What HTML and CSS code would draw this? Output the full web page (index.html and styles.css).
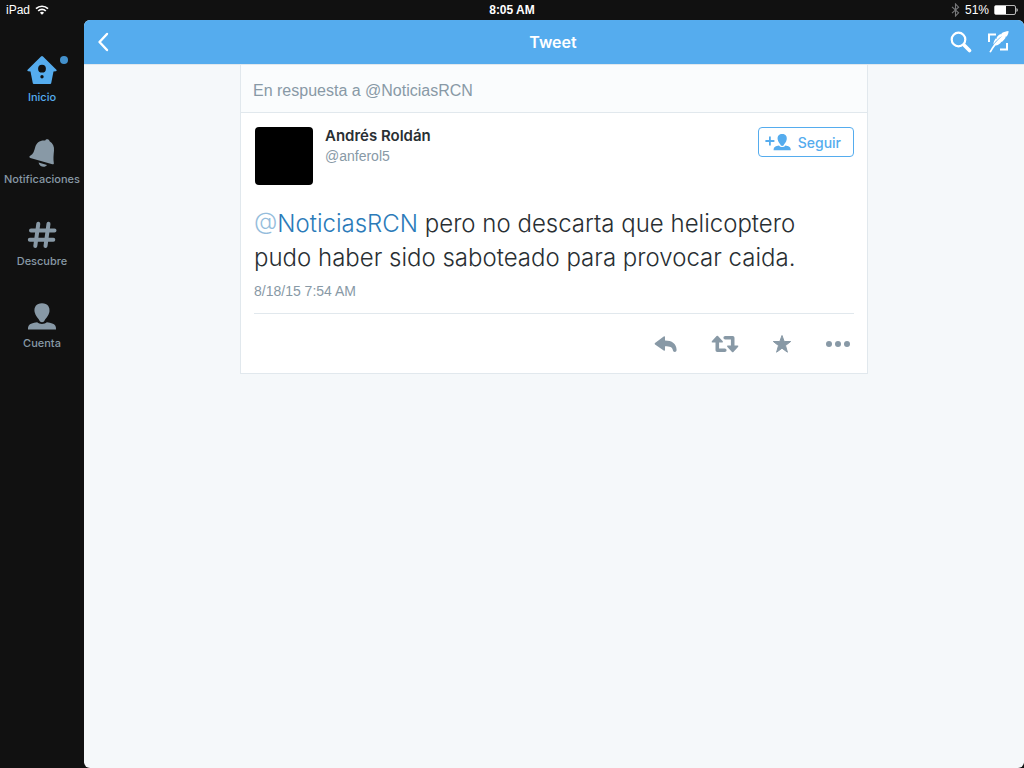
FILE: index.html
```html
<!DOCTYPE html>
<html lang="es">
<head>
  <meta charset="utf-8">
  <meta name="viewport" content="width=device-width, initial-scale=1">
  <title>Tweet</title>
  <link rel="stylesheet" href="styles.css">
</head>
<body>
  <div class="status-bar">
    <div class="status-left">
      <span>iPad</span>
      <svg class="wifi" width="14" height="10" viewBox="0 0 14 10" fill="none" stroke="#fff" stroke-width="1.7">
        <path d="M1 3.7a8.6 8.6 0 0 1 12 0M3.2 6a5.4 5.4 0 0 1 7.6 0"/>
        <path d="M7 9.8L4.9 7.7a3 3 0 0 1 4.2 0z" fill="#fff" stroke="none"/>
      </svg>
    </div>
    <span class="clock">8:05 AM</span>
    <div class="status-right">
      <svg width="9" height="14" viewBox="0 0 9 14" fill="none" stroke="#77787a" stroke-width="1.1">
        <path d="M1 3.8l6.6 6L4.5 13V1l3.1 3.2L1 10.2"/>
      </svg>
      <span>51%</span>
      <svg width="24" height="10" viewBox="0 0 24 10">
        <rect x=".5" y=".5" width="21" height="9" rx="1.5" fill="none" stroke="#bbb"/>
        <rect x="1" y="1" width="11" height="8" fill="#fff"/>
        <path d="M22.500 3a2.200 2.200 0 0 1 0 4z" fill="#ddd"/>
      </svg>
    </div>
  </div>

  <div class="app">
    <nav class="sidebar">
      <a class="tab active" href="#inicio">
        <svg width="30" height="30" viewBox="0 0 30 30">
          <path fill="currentColor" fill-rule="evenodd" d="M14 1.400q1-.9 2 0l13.400 13.400q.7 1.200-.7 1.400l-2.200.2-2.300 11.800q-.2.800-1 .8H6.800q-.8 0-1-.8L3.500 16.400l-2.200-.2q-1.400-.2-.7-1.400zM15 9.800a3.900 3.900 0 1 0 0 7.800 3.900 3.900 0 0 0 0-7.800zM15 20a1.700 1.700 0 1 0 0 3.400 1.700 1.700 0 0 0 0-3.400z"/>
        </svg>
        <span>Inicio</span>
        <i class="dot"></i>
      </a>
      <a class="tab" href="#notificaciones">
        <svg width="30" height="30" viewBox="0 0 30 30" fill="currentColor">
          <path d="M18.200 3.500C18.800 1.700 22 1.600 22.600 4.200c3.400 2.200 4.800 5.300 4.400 9.300-.5 4.700-.8 8.700-.2 12.400.2 1.300-.4 1.600-1.500 1.300L3.300 20.900c-1.200-.4-1.200-1.600-.1-2.100 3.300-2 4-5 5-8.600C9.400 5.500 13 3 18.200 3.500z"/>
          <path d="M11.600 25.500l8.400 2.500c-1.800 3-7.800 2.100-8.400-2.500z"/>
        </svg>
        <span>Notificaciones</span>
      </a>
      <a class="tab" href="#descubre">
        <svg width="30" height="30" viewBox="0 0 30 30" fill="none" stroke="currentColor" stroke-width="4" stroke-linecap="round">
          <path d="M11.300 4.800L8.300 27M21.500 4.800L18.500 27M4 11.500h23.500M2.800 20.800h23.500"/>
        </svg>
        <span>Descubre</span>
      </a>
      <a class="tab" href="#cuenta">
        <svg width="30" height="30" viewBox="0 0 30 30" fill="currentColor">
          <path d="M15 2.300c5.800 0 8.200 4 7.400 8.700-.7 4-4.100 6.600-5.400 9.500q-2 1.600-4 0c-1.300-2.900-4.700-5.500-5.400-9.500-.8-4.700 1.600-8.700 7.400-8.700z"/>
          <path d="M10.200 21.300c2.200 2.200 7.400 2.200 9.600 0 4.400.8 7.200 1.300 8.400 3.200.7 1.100.9 2.500.8 4H1c-.1-1.500.1-2.900.8-4 1.200-1.900 4-2.400 8.400-3.200z"/>
        </svg>
        <span>Cuenta</span>
      </a>
    </nav>

    <main class="panel">
      <header class="topbar">
        <button class="icon-button" type="button" aria-label="Atrás">
          <svg width="12" height="20" viewBox="0 0 12 20" fill="none" stroke="#fff" stroke-width="2.4" stroke-linecap="round" stroke-linejoin="round">
            <path d="M10 2L2.500 10l7.500 8"/>
          </svg>
        </button>
        <h1>Tweet</h1>
        <div class="topbar-actions">
          <button class="icon-button" type="button" aria-label="Buscar">
            <svg width="22" height="22" viewBox="0 0 22 22" fill="none" stroke="#fff" stroke-linecap="round">
              <circle cx="8.500" cy="8.500" r="6.800" stroke-width="2.200"/>
              <path d="M14.500 14.500l5 5" stroke-width="3.600"/>
            </svg>
          </button>
          <button class="icon-button" type="button" aria-label="Escribir">
            <svg width="22" height="22" viewBox="0 0 22 22">
              <path d="M9 3.500H2V11M13 18.500h7V12" fill="none" stroke="#fff" stroke-width="2"/>
              <path fill="#fff" d="M21.500 0c.2 2-.5 3.800-1.900 5.500l-1.700.5.900.5c-1.200 1.700-2.300 3-3.700 4.200l-1.900.3 1 .5c-1.600 1.600-3.300 2.700-5.700 3.100-1.700 2-3.100 4.300-4.600 7l-1.600-.5C5.300 15 9.200 10 15.500 4.800 11.200 7.500 8.600 10.300 6.400 13.500c0-2.500.9-4.500 2.500-6.300l.5 1 .5-2.200c1.400-1.500 2.400-2.400 3.700-3.200l.3 1 1-1.700C17 1 19 .3 21.500 0z"/>
            </svg>
          </button>
        </div>
      </header>

      <article class="card">
        <p class="reply-to">En respuesta a @NoticiasRCN</p>
        <div class="tweet">
          <div class="author">
            <div class="avatar"></div>
            <div class="names">
              <h2>Andrés Roldán</h2>
              <p>@anferol5</p>
            </div>
            <button class="follow" type="button">
              <svg width="26" height="18" viewBox="0 0 26 18" fill="currentColor">
                <path d="M4 3.500h1.800v3.600h3.600v1.800H5.800v3.600H4V8.900H.4V7.100H4z"/>
                <path d="M17.200 1c3.800 0 5 2.500 4.500 5.500-.4 2.500-2.200 4.100-3.200 6q-1.300.9-2.600 0c-1-1.900-2.800-3.500-3.200-6-.5-3 .7-5.500 4.500-5.500z"/>
                <path d="M14 12.600c1.500 2 4.900 2 6.400 0 3 .5 5.400 1.200 5.400 4.600H8.600c0-3.400 2.400-4.100 5.400-4.600z"/>
              </svg>
              <span>Seguir</span>
            </button>
          </div>
          <p class="tweet-text"><a href="#noticiasrcn"><span class="at">@</span>NoticiasRCN</a> pero no descarta que helicoptero pudo haber sido saboteado para provocar caida.</p>
          <p class="date">8/18/15 7:54 AM</p>
          <div class="actions">
            <button class="icon-button" type="button" aria-label="Responder">
              <svg width="24" height="20" viewBox="0 0 24 20">
                <path fill="currentColor" d="M1 9.100L9.700 2.400q1.300-.7 1.300.7v3.400c7 0 11.600 3.300 11.600 9.500 0 2.600-3.600 2.600-3.800 0-.4-2.800-3-3.800-7.800-3.800v3.600q0 1.400-1.300.7L1 10.500q-.8-.7 0-1.400z"/>
              </svg>
            </button>
            <button class="icon-button" type="button" aria-label="Retwittear">
              <svg width="28" height="20" viewBox="0 0 28 20">
                <path fill="none" stroke="currentColor" stroke-width="3.600" stroke-linecap="round" stroke-linejoin="round" d="M6.300 7v9.200h7.500M14.200 3.800h7.500V13"/>
                <path fill="currentColor" d="M5.600 2q.7-.6 1.400 0l4.800 5.200q.6 1.200-.7 1.300H1.500Q.2 8.400.8 7.200zM22.400 18q-.7.6-1.400 0l-4.800-5.200q-.6-1.200.7-1.300h9.600q1.300.1.700 1.300z"/>
              </svg>
            </button>
            <button class="icon-button" type="button" aria-label="Favorito">
              <svg width="20" height="20" viewBox="0 0 20 20">
                <path fill="currentColor" stroke="currentColor" stroke-linejoin="round" d="M10 1.500l2.200 6h6.500l-5.200 4 1.900 6.700-5.400-4-5.400 4 1.900-6.700-5.200-4h6.500z"/>
              </svg>
            </button>
            <button class="icon-button" type="button" aria-label="Más">
              <svg width="26" height="20" viewBox="0 0 26 20" fill="currentColor">
                <circle cx="4" cy="10" r="3"/>
                <circle cx="13" cy="10" r="3"/>
                <circle cx="22" cy="10" r="3"/>
              </svg>
            </button>
          </div>
        </div>
      </article>
    </main>
  </div>
</body>
</html>
```
FILE: styles.css
```css
* {
  box-sizing: border-box;
}

body {
  display: flex;
  flex-direction: column;
  min-height: 100vh;
  margin: 0;
  background-color: #111;
  color: #292f33;
  font-family: "Liberation Sans", Arial, sans-serif;
}

h1,
h2,
p {
  margin: 0;
}

a {
  text-decoration: none;
}

svg {
  display: block;
}

button {
  padding: 0;
  border: none;
  background: none;
  color: inherit;
  font-family: inherit;
  cursor: pointer;
}

.status-bar {
  display: grid;
  grid-template-columns: 1fr auto 1fr;
  align-items: center;
  height: 20px;
  padding: 0 6px;
  color: #fff;
  font-size: 12px;
}

.status-left,
.status-right {
  display: flex;
  align-items: center;
  gap: 5px;
}

.status-right {
  justify-content: flex-end;
}

.clock {
  font-weight: bold;
}

.tab,
.topbar h1,
.names h2,
.follow {
  font-family: Inter, "Liberation Sans", sans-serif;
}

.app {
  display: flex;
  flex: 1;
}

.sidebar {
  display: flex;
  flex-direction: column;
  flex: none;
  gap: 32px;
  width: 84px;
  padding-top: 35px;
}

.tab {
  position: relative;
  display: flex;
  flex-direction: column;
  align-items: center;
  gap: 5px;
  color: #8899a6;
  font-size: 11px;
  font-weight: 500;
  line-height: 15px;
}

.tab.active {
  color: #55acee;
}

.dot {
  position: absolute;
  top: 1px;
  right: 16px;
  width: 8px;
  height: 8px;
  border-radius: 50%;
  background-color: #4390cc;
}

.panel {
  flex: 1;
  border-radius: 6px;
  overflow: hidden;
  background-color: #f5f8fa;
}

.topbar {
  display: grid;
  grid-template-columns: 1fr auto 1fr;
  align-items: center;
  height: 45px;
  padding: 0 15px 0 13px;
  border-bottom: 1px solid #e1e8ed;
  background-color: #55acee;
  color: #fff;
}

.topbar h1 {
  font-size: 16px;
  font-weight: 600;
}

.topbar-actions {
  display: flex;
  justify-content: flex-end;
  gap: 15px;
}

.icon-button {
  justify-self: start;
}

.card {
  max-width: 628px;
  margin: 0 auto;
  border: 1px solid #e1e8ed;
  border-top: none;
  background-color: #fff;
}

.reply-to {
  padding: 16px 12px 11px;
  border-bottom: 1px solid #e1e8ed;
  background-color: #fafcfd;
  color: #8899a6;
  font-size: 16px;
  line-height: 20px;
}

.tweet {
  padding: 14px 13px 0;
}

.author {
  display: flex;
  align-items: flex-start;
  gap: 12px;
}

.avatar {
  width: 58px;
  height: 58px;
  margin-left: 1px;
  border-radius: 4px;
  background-color: #000;
}

.names {
  flex: 1;
}

.names h2 {
  font-size: 15px;
  font-weight: 600;
  line-height: 18px;
}

.names p {
  color: #8899a6;
  font-size: 14px;
  line-height: 22px;
}

.follow {
  display: flex;
  align-items: center;
  gap: 7px;
  height: 30px;
  padding: 0 12px 0 6px;
  border: 1px solid #55acee;
  border-radius: 4px;
  color: #55acee;
  font-size: 14px;
  font-weight: 500;
}

.tweet-text {
  margin-top: 22px;
  font-family: Inter, "Liberation Sans", sans-serif;
  font-size: 24px;
  font-weight: 300;
  line-height: 34px;
}

.tweet-text a {
  color: #2b7bb9;
}

.tweet-text .at {
  color: #95bddc;
}

.date {
  padding: 6px 0 12px;
  border-bottom: 1px solid #e1e8ed;
  color: #8899a6;
  font-size: 14px;
  line-height: 20px;
}

.actions {
  display: flex;
  align-items: center;
  justify-content: flex-end;
  gap: 33px;
  height: 59px;
  padding-right: 3px;
  color: #8899a6;
}
```
